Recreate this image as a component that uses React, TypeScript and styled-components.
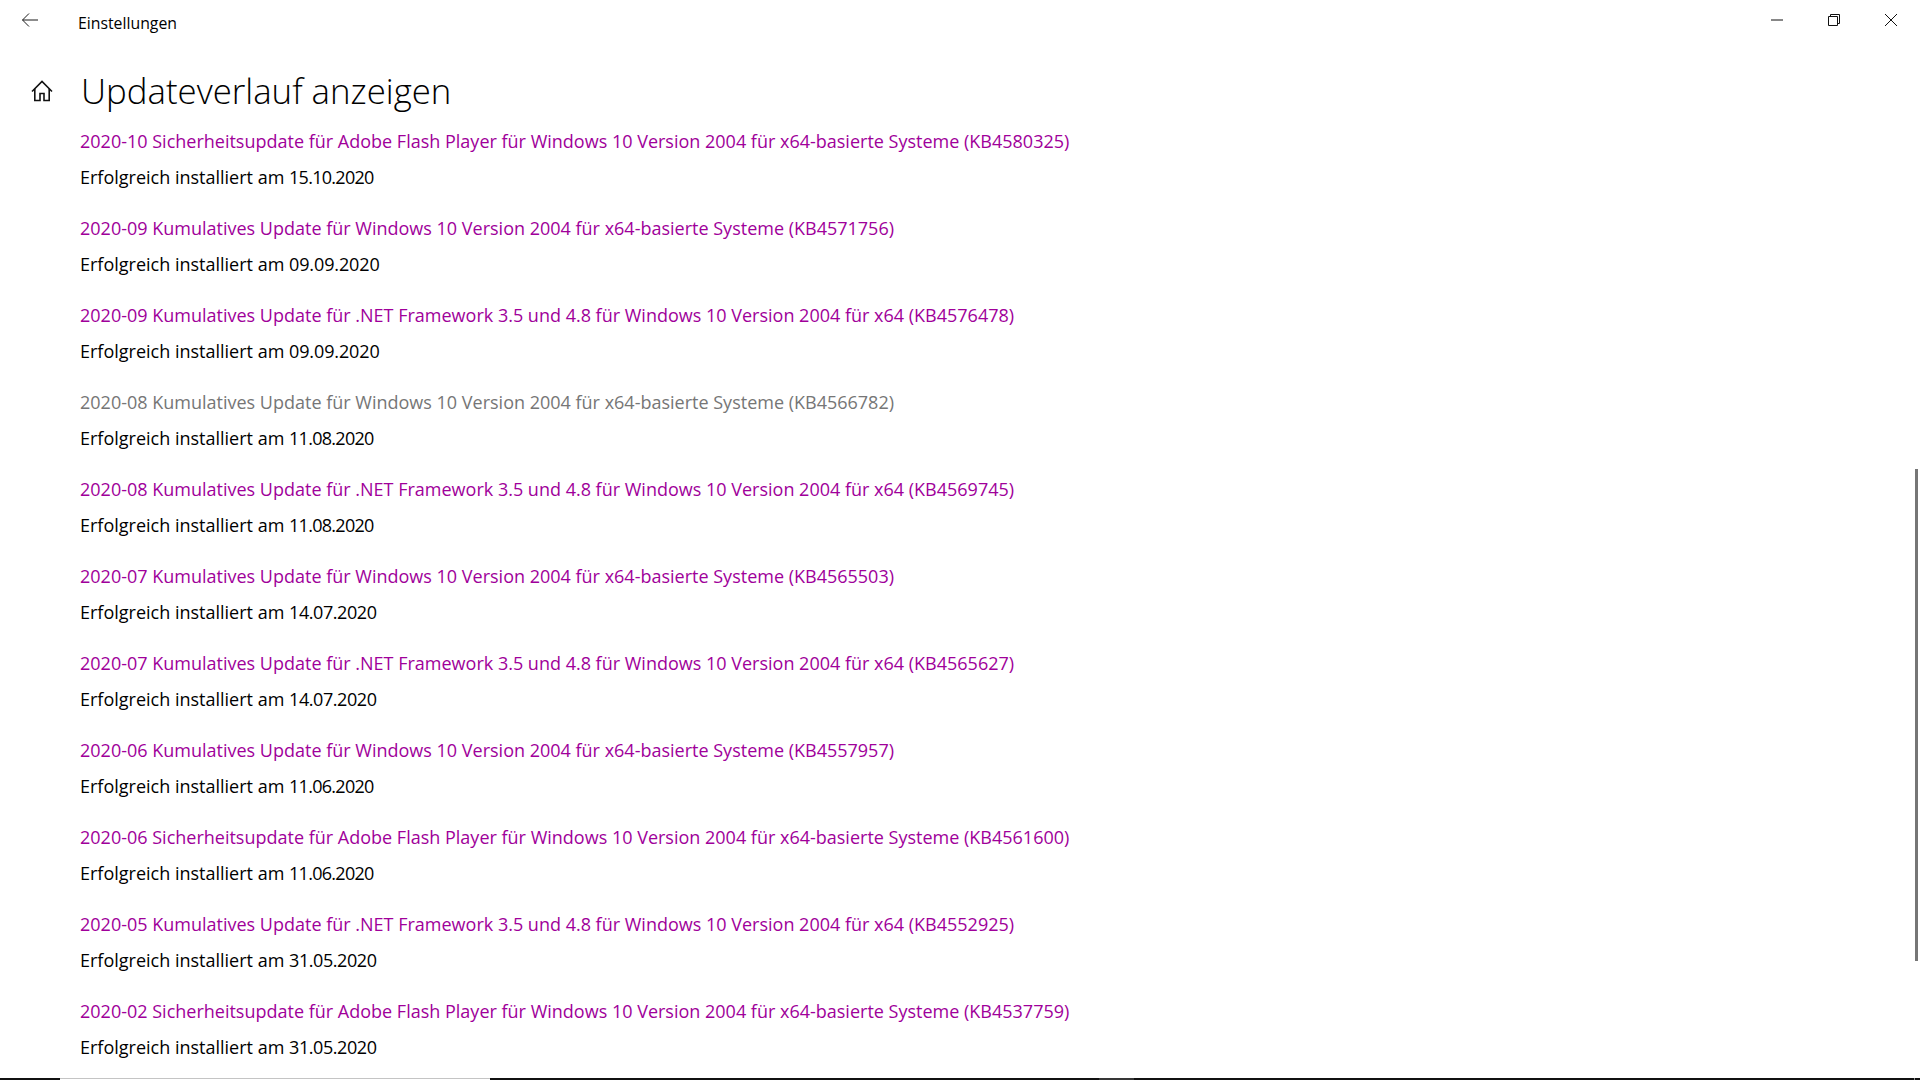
import * as React from 'react';
import styled, { createGlobalStyle } from 'styled-components';

const GlobalStyle = createGlobalStyle`
  html, body {
    margin: 0;
    height: 100%;
    overflow: hidden;
    background: #ffffff;
  }
`;

const Page = styled.div`
  position: relative;
  display: flex;
  flex-direction: column;
  width: 1920px;
  height: 1080px;
  overflow: hidden;
  background: #fff;
  color: #000;
  font-family: 'Open Sans', 'Noto Sans', sans-serif;
`;

const TitleBar = styled.header`
  display: flex;
  align-items: center;
  height: 40px;
  flex: none;
`;

const BackButton = styled.div`
  display: flex;
  justify-content: center;
  width: 20px;
  margin-left: 20px;
  margin-bottom: 1px;
`;

const AppName = styled.span`
  margin-left: 38px;
  margin-top: 5px;
  font-size: 15.8px;
`;

const WindowControls = styled.div`
  display: flex;
  margin-left: auto;
  height: 40px;
  padding-right: 1px;
`;

const ControlButton = styled.div`
  display: flex;
  align-items: center;
  justify-content: center;
  width: 57px;
  height: 40px;
`;

const Heading = styled.div`
  display: flex;
  align-items: center;
  height: 51px;
  margin-top: 25px;
  flex: none;
`;

const HomeIcon = styled.div`
  display: flex;
  width: 24px;
  margin-left: 30px;
`;

const Title = styled.h1`
  margin: 0 0 0 27px;
  font-size: 34.8px;
  font-weight: 300;
  line-height: 51px;
`;

const UpdateList = styled.main`
  display: flex;
  flex-direction: column;
  gap: 27px;
  padding: 13px 0 0 80px;
`;

const UpdateItem = styled.div`
  display: flex;
  flex-direction: column;
  gap: 12px;
`;

const UpdateLink = styled.a<{ $pressed?: boolean }>`
  font-size: 18px;
  line-height: 24px;
  color: ${({ $pressed }) => ($pressed ? '#767676' : '#a0009a')};
  white-space: nowrap;
`;

const UpdateStatus = styled.span`
  font-size: 18px;
  line-height: 24px;
  color: #000;
`;

// the digit 1 is narrower in the reference's font, so dates with more of them run tighter
const UpdateDate = styled.span<{ $ones: number }>`
  letter-spacing: ${({ $ones }) => -0.12 - $ones * 0.3}px;
`;

const Scrollbar = styled.div`
  position: absolute;
  top: 469px;
  right: 2px;
  width: 3px;
  height: 492px;
  background: #767676;
`;

const TaskStrip = styled.div`
  position: absolute;
  left: 0;
  right: 0;
  bottom: 0;
  display: flex;
  height: 2px;
  background: #111;
`;

const StripSegment = styled.div<{ $tone: string; $width: number; $offset: number }>`
  width: ${({ $width }) => $width}px;
  margin-left: ${({ $offset }) => $offset}px;
  background: ${({ $tone }) => $tone};
`;

const updates = [
  ['2020-10 Sicherheitsupdate für Adobe Flash Player für Windows 10 Version 2004 für x64-basierte Systeme (KB4580325)', '15.10.2020'],
  ['2020-09 Kumulatives Update für Windows 10 Version 2004 für x64-basierte Systeme (KB4571756)', '09.09.2020'],
  ['2020-09 Kumulatives Update für .NET Framework 3.5 und 4.8 für Windows 10 Version 2004 für x64 (KB4576478)', '09.09.2020'],
  ['2020-08 Kumulatives Update für Windows 10 Version 2004 für x64-basierte Systeme (KB4566782)', '11.08.2020'],
  ['2020-08 Kumulatives Update für .NET Framework 3.5 und 4.8 für Windows 10 Version 2004 für x64 (KB4569745)', '11.08.2020'],
  ['2020-07 Kumulatives Update für Windows 10 Version 2004 für x64-basierte Systeme (KB4565503)', '14.07.2020'],
  ['2020-07 Kumulatives Update für .NET Framework 3.5 und 4.8 für Windows 10 Version 2004 für x64 (KB4565627)', '14.07.2020'],
  ['2020-06 Kumulatives Update für Windows 10 Version 2004 für x64-basierte Systeme (KB4557957)', '11.06.2020'],
  ['2020-06 Sicherheitsupdate für Adobe Flash Player für Windows 10 Version 2004 für x64-basierte Systeme (KB4561600)', '11.06.2020'],
  ['2020-05 Kumulatives Update für .NET Framework 3.5 und 4.8 für Windows 10 Version 2004 für x64 (KB4552925)', '31.05.2020'],
  ['2020-02 Sicherheitsupdate für Adobe Flash Player für Windows 10 Version 2004 für x64-basierte Systeme (KB4537759)', '31.05.2020'],
];

export default function App() {
  return (
    <Page>
      <GlobalStyle />
      <TitleBar>
        <BackButton>
          <svg width="16" height="14" viewBox="0 0 16 14" fill="none" stroke="#1a1a1a" strokeWidth="1">
            <path d="M0.5 7H16M7 0.5L0.5 7L7 13.5" />
          </svg>
        </BackButton>
        <AppName>Einstellungen</AppName>
        <WindowControls>
          <ControlButton>
            <svg width="12" height="2" viewBox="0 0 12 2" stroke="#111" strokeWidth="1">
              <path d="M0 1H12" />
            </svg>
          </ControlButton>
          <ControlButton>
            <svg width="12" height="12" viewBox="0 0 12 12" fill="none" stroke="#111" strokeWidth="1">
              <path d="M0.5 2.5H9.5V11.5H0.5Z" />
              <path d="M2.5 2.5V0.5H11.5V9.5H9.5" />
            </svg>
          </ControlButton>
          <ControlButton>
            <svg width="12" height="12" viewBox="0 0 12 12" stroke="#111" strokeWidth="1">
              <path d="M0 0L12 12M12 0L0 12" />
            </svg>
          </ControlButton>
        </WindowControls>
      </TitleBar>
      <Heading>
        <HomeIcon>
          <svg width="24" height="24" viewBox="0 0 24 24" fill="none" stroke="#111" strokeWidth="1.6">
            <path d="M2 12.5L12 2.5L22 12.5" />
            <path d="M4.8 9.8V21.5H10V14.5H14V21.5H19.2V9.8" />
          </svg>
        </HomeIcon>
        <Title>Updateverlauf anzeigen</Title>
      </Heading>
      <UpdateList>
        {updates.map(([name, date], index) => (
          <UpdateItem key={name}>
            <UpdateLink $pressed={index === 3}>{name}</UpdateLink>
            <UpdateStatus>
              Erfolgreich installiert am <UpdateDate $ones={date.split('1').length - 1}>{date}</UpdateDate>
            </UpdateStatus>
          </UpdateItem>
        ))}
      </UpdateList>
      <Scrollbar />
      <TaskStrip>
        <StripSegment $tone="linear-gradient(#c4c4c4 50%, #fff 50%)" $offset={60} $width={430} />
        <StripSegment $tone="#363636" $offset={609} $width={35} />
        <StripSegment $tone="#8a8a8a" $offset={780} $width={1} />
      </TaskStrip>
    </Page>
  );
}
